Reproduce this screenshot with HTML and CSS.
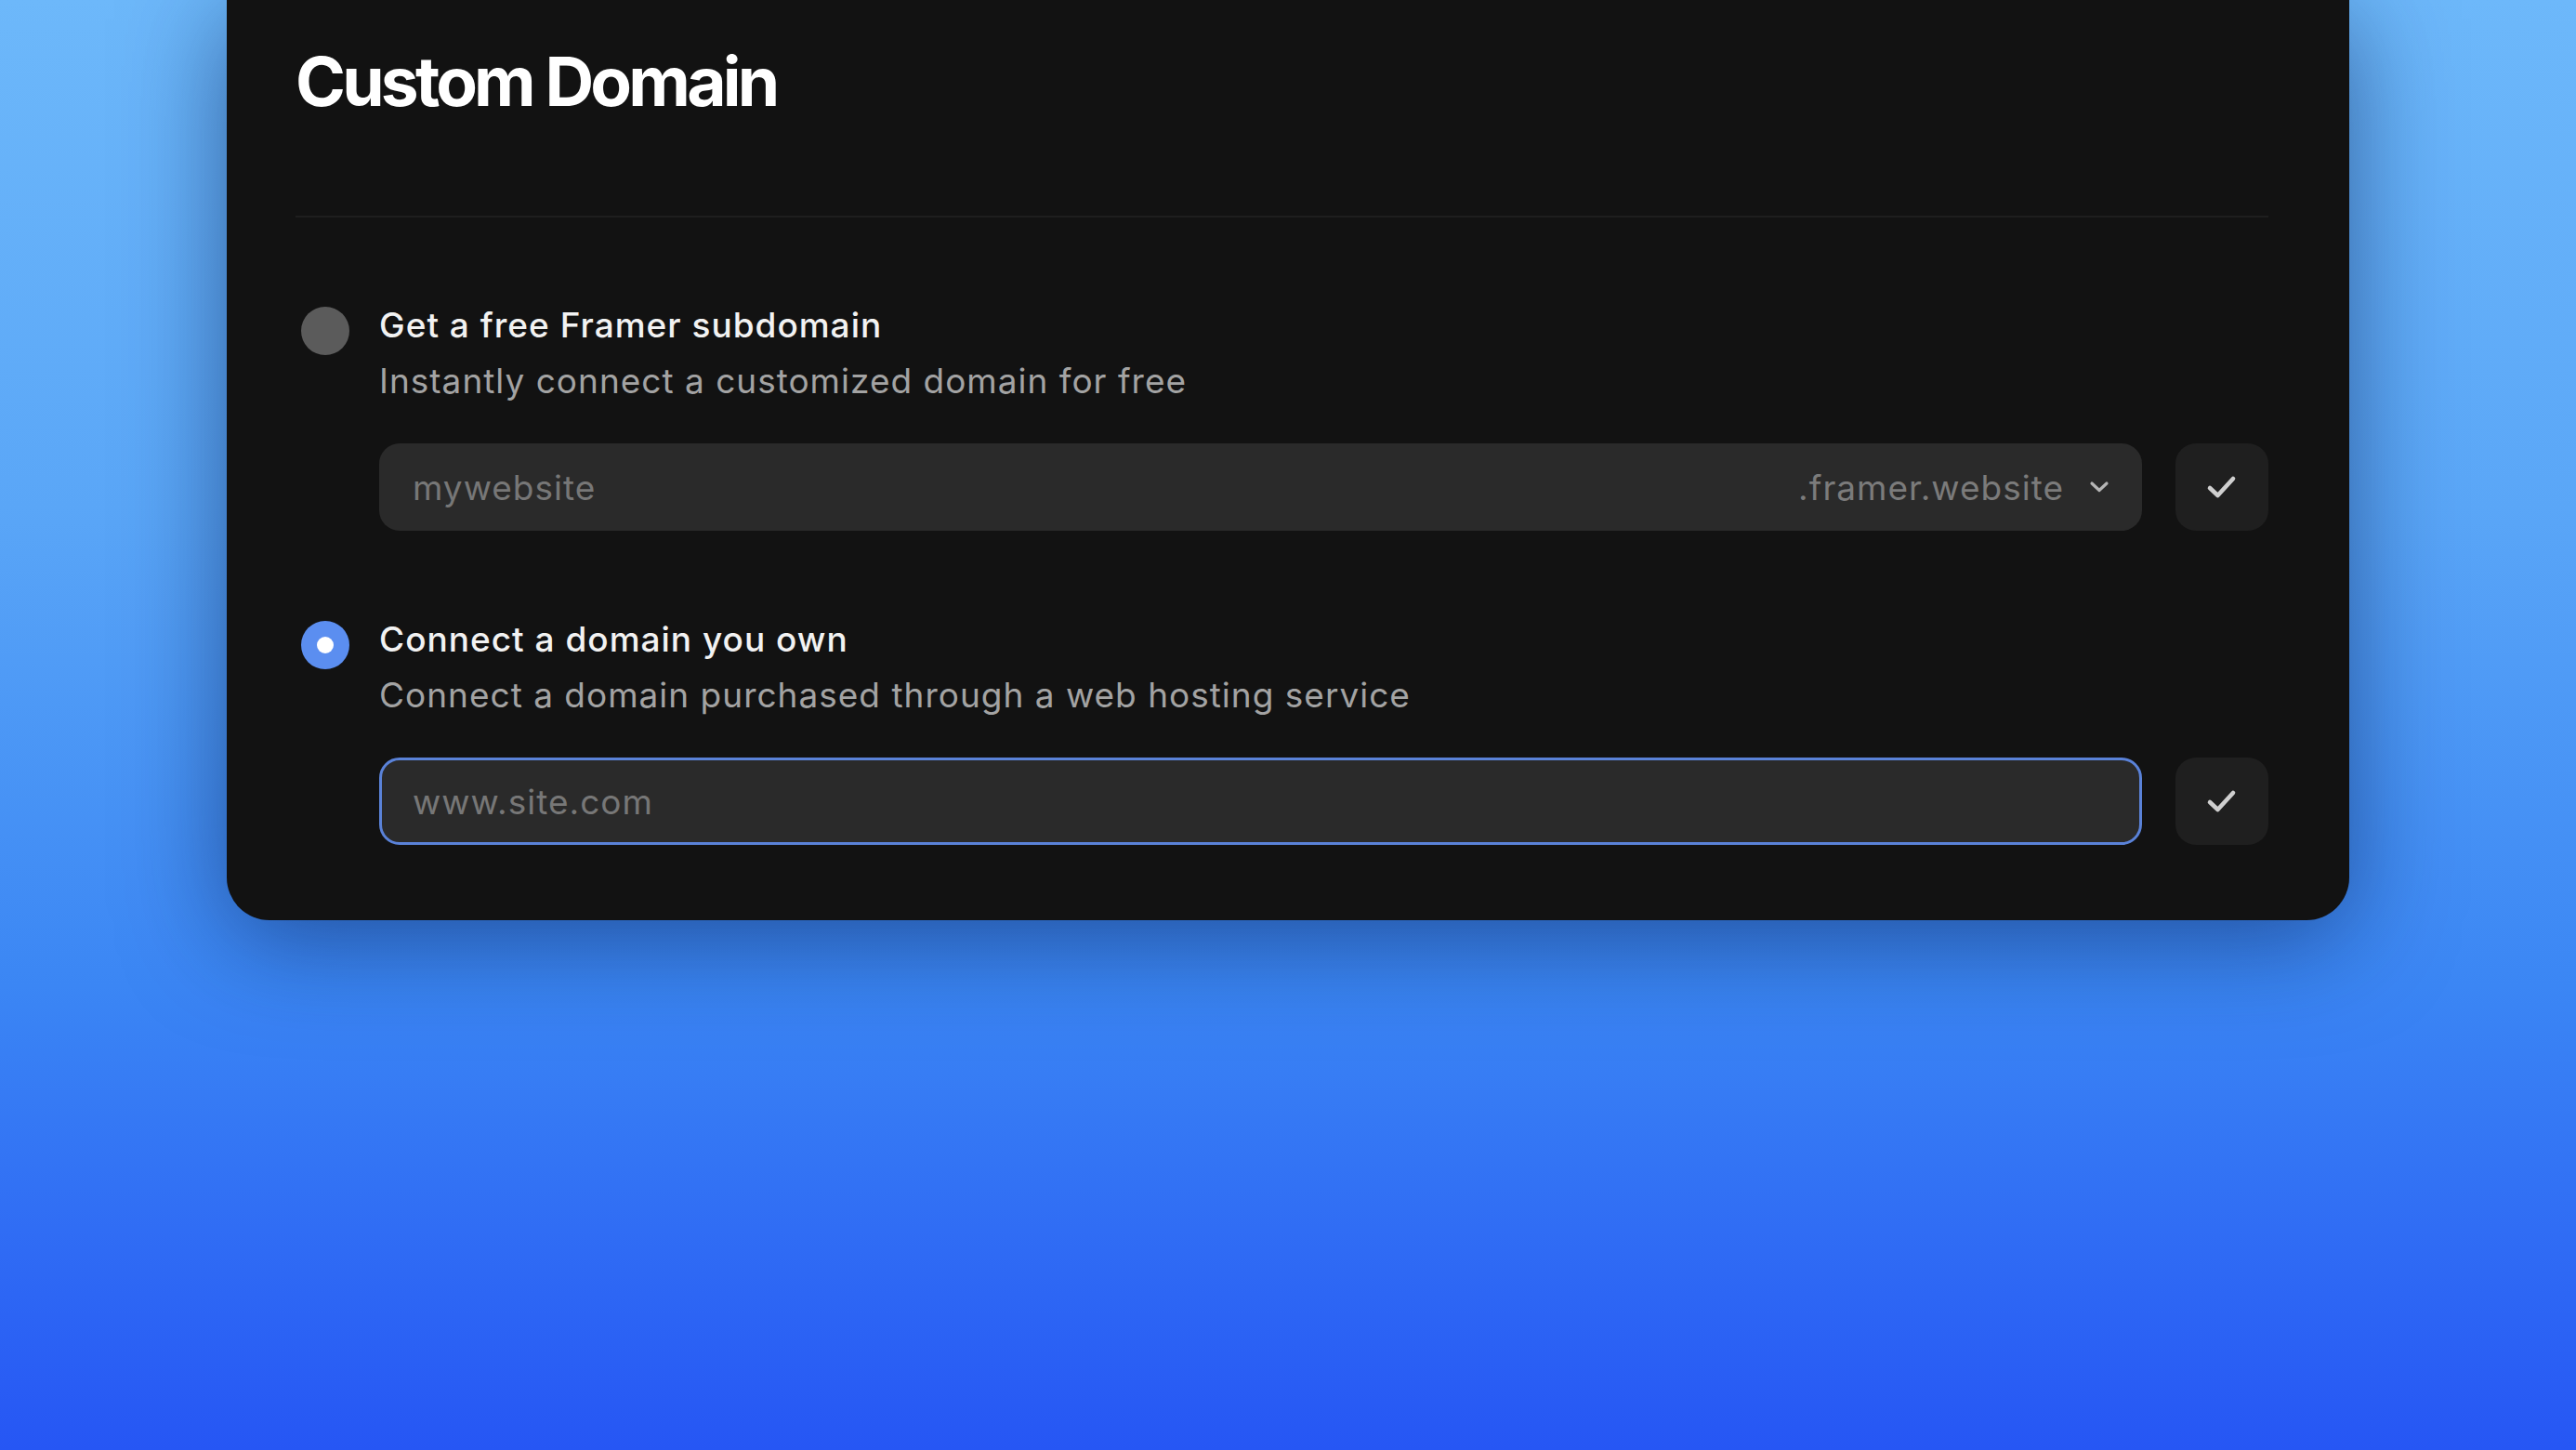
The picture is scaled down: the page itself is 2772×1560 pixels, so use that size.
FILE: index.html
```html
<!DOCTYPE html>
<html lang="en">
<head>
    <meta charset="UTF-8">
    <title>Custom Domain</title>
    <link rel="stylesheet" href="styles.css">
</head>
<body>
<div class="panel">
    <h1 class="title">Custom Domain</h1>
    <div class="divider"></div>

    <div class="option">
        <span class="radio"></span>
        <div class="option-body">
            <div class="label">Get a free Framer subdomain</div>
            <div class="desc">Instantly connect a customized domain for free</div>
            <div class="field-row">
                <div class="field">
                    <span class="placeholder">mywebsite</span>
                    <span class="suffix">.framer.website
                        <svg class="chevron" width="24" height="14" viewBox="0 0 24 14"><path d="M4 3 L12 10.5 L20 3" fill="none" stroke="currentColor" stroke-width="3.2" stroke-linecap="round" stroke-linejoin="round"/></svg>
                    </span>
                </div>
                <button class="confirm">
                    <svg width="34" height="28" viewBox="0 0 34 28"><path d="M4 15 L12.5 23 L29 5" fill="none" stroke="currentColor" stroke-width="4.6" stroke-linecap="round" stroke-linejoin="round"/></svg>
                </button>
            </div>
        </div>
    </div>

    <div class="option">
        <span class="radio on"></span>
        <div class="option-body">
            <div class="label">Connect a domain you own</div>
            <div class="desc">Connect a domain purchased through a web hosting service</div>
            <div class="field-row">
                <div class="field active">
                    <span class="placeholder">www.site.com</span>
                </div>
                <button class="confirm">
                    <svg width="34" height="28" viewBox="0 0 34 28"><path d="M4 15 L12.5 23 L29 5" fill="none" stroke="currentColor" stroke-width="4.6" stroke-linecap="round" stroke-linejoin="round"/></svg>
                </button>
            </div>
        </div>
    </div>
</div>
</body>
</html>
```

FILE: styles.css
```css
*{
    margin: 0;
    padding: 0;
    box-sizing: border-box;
}
html,body{
    width: 100%;
    height: 100%;
}
body{
    overflow: hidden;
    font-family: Inter, "Liberation Sans", sans-serif;
    background: linear-gradient(180deg, #6db8fa 0%, #5aa6f7 35%, #3b86f4 68%, #2656f4 100%);
}
.panel{
    width: 2284px;
    margin: 0 auto;
    padding: 44px 87px 81px 74px;
    background-color: #121212;
    border-radius: 0 0 46px 46px;
    box-shadow: 0 20px 110px rgba(8,30,80,.55);
}
.title{
    font-size: 73px;
    line-height: 88px;
    font-weight: 700;
    letter-spacing: -3.8px;
    color: #fff;
}
.divider{
    height: 2px;
    margin-top: 100px;
    background-color: #1e1e1e;
}

.option{
    display: flex;
    gap: 32px;
    margin-top: 86px;
    padding-left: 6px;
}
.option + .option{
    margin-top: 87px;
}
.radio{
    flex: none;
    width: 52px;
    height: 52px;
    margin-top: 10px;
    border-radius: 50%;
    background-color: #5b5b5b;
}
.radio.on{
    background-color: #5b8ef0;
    display: flex;
    align-items: center;
    justify-content: center;
}
.radio.on::after{
    content: "";
    width: 18px;
    height: 18px;
    border-radius: 50%;
    background-color: #fff;
}
.option-body{
    flex: 1;
}
.label{
    font-size: 37px;
    line-height: 60px;
    font-weight: 500;
    letter-spacing: 1px;
    color: #f2f2f2;
}
.desc{
    font-size: 37px;
    line-height: 60px;
    letter-spacing: 1px;
    color: #a3a3a3;
}

.field-row{
    display: flex;
    gap: 36px;
    margin-top: 37px;
}
.field{
    flex: 1;
    height: 94px;
    padding: 0 32px 0 34px;
    display: flex;
    align-items: center;
    justify-content: space-between;
    border: 2px solid transparent;
    border-radius: 22px;
    background-color: #2a2a2a;
    font-size: 37px;
    letter-spacing: 1px;
}
.field.active{
    border: 3px solid #5a82d8;
    padding-left: 33px;
}
.placeholder{
    color: #777;
}
.suffix{
    display: flex;
    align-items: center;
    gap: 26px;
    color: #7b7b7b;
}
.chevron{
    color: #b5b5b5;
}
.confirm{
    flex: none;
    width: 100px;
    height: 94px;
    border: none;
    border-radius: 22px;
    background-color: #1f1f1f;
    color: #cfcfcf;
    display: flex;
    align-items: center;
    justify-content: center;
}
```
